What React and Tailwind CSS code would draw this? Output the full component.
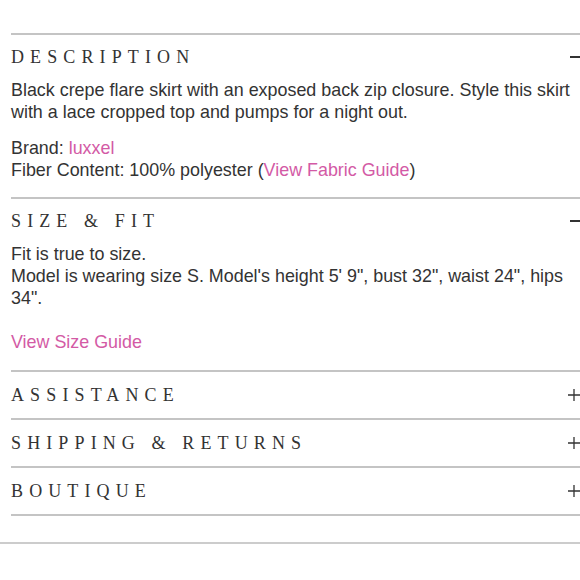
import React from "react";

const serif = { fontFamily: '"Liberation Serif", "Times New Roman", serif' };

function Minus() {
  return <div className="w-[10px] h-[2px] bg-[#333333]" />;
}

function Plus() {
  return (
    <svg width="12" height="12" viewBox="0 0 12 12" className="block">
      <path d="M0 6H12M6 0V12" stroke="#333333" strokeWidth="1.3" />
    </svg>
  );
}

function Heading({ title, open }) {
  return (
    <div className={`flex items-center justify-between ${open ? "h-[44px]" : "h-[46px]"}`}>
      <span
        className="text-[18px] tracking-[0.34em] text-[#333333] leading-none"
        style={serif}
      >
        {title}
      </span>
      {open ? <Minus /> : <Plus />}
    </div>
  );
}

const pink = "text-[#d35aa5]";

export default function App() {
  return (
    <div
      className="w-[580px] h-[580px] bg-white overflow-hidden"
      style={{ fontFamily: '"Liberation Sans", Arial, sans-serif' }}
    >
      <div className="pt-[33px] pl-[11px]">
        <section className="border-t-2 border-[#c4c4c4]">
          <Heading title="DESCRIPTION" open />
          <div className="text-[17.9px] leading-[22px] text-[#333333] pb-[16px]">
            <p>
              Black crepe flare skirt with an exposed back zip closure. Style this skirt with a
              lace cropped top and pumps for a night out.
            </p>
            <p className="mt-[14px]">
              Brand: <span className={pink}>luxxel</span>
            </p>
            <p>
              Fiber Content: 100% polyester (<span className={pink}>View Fabric Guide</span>)
            </p>
          </div>
        </section>
        <section className="border-t-2 border-[#c4c4c4]">
          <Heading title="SIZE & FIT" open />
          <div className="text-[17.9px] leading-[22px] text-[#333333] pb-[17px]">
            <p>Fit is true to size.</p>
            <p>
              Model is wearing size S. Model's height 5' 9", bust 32", waist 24", hips 34".
            </p>
            <p className="mt-[22px]">
              <span className={pink}>View Size Guide</span>
            </p>
          </div>
        </section>
        <section className="border-t-2 border-[#c4c4c4]">
          <Heading title="ASSISTANCE" />
        </section>
        <section className="border-t-2 border-[#c4c4c4]">
          <Heading title="SHIPPING & RETURNS" />
        </section>
        <section className="border-t-2 border-[#c4c4c4]">
          <Heading title="BOUTIQUE" />
        </section>
        <div className="border-t-2 border-[#c4c4c4]" />
      </div>
      <div className="mt-[26px] border-t-2 border-[#cccccc]" />
    </div>
  );
}
